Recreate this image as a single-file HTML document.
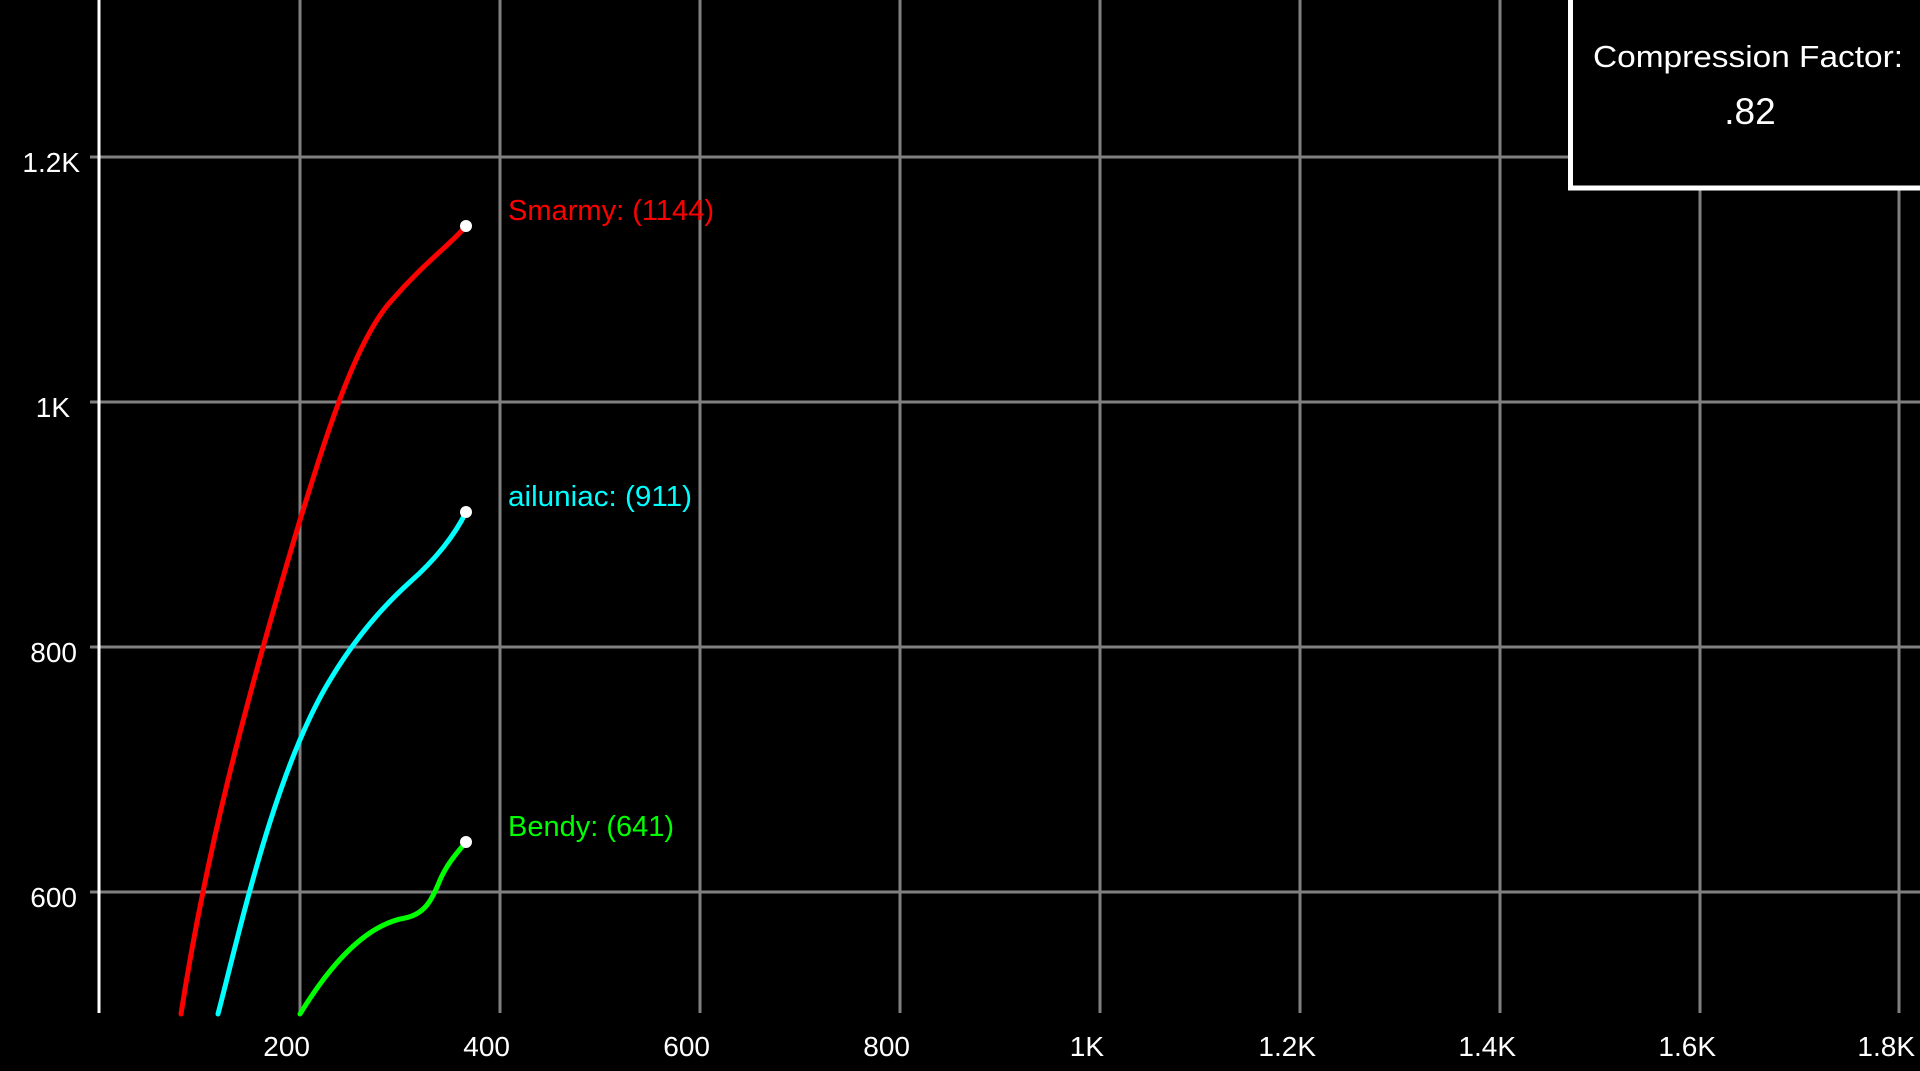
<!DOCTYPE html>
<html><head><meta charset="utf-8"><style>
html,body{margin:0;padding:0;background:#000;width:1920px;height:1071px;overflow:hidden}
svg{display:block}
text{font-family:"Liberation Sans",sans-serif}
</style></head><body>
<svg width="1920" height="1071" viewBox="0 0 1920 1071">
<rect width="1920" height="1071" fill="#000"/>
<g stroke="#808080" stroke-width="3">
<line x1="300" y1="0" x2="300" y2="1013"/>
<line x1="500" y1="0" x2="500" y2="1013"/>
<line x1="700" y1="0" x2="700" y2="1013"/>
<line x1="900" y1="0" x2="900" y2="1013"/>
<line x1="1100" y1="0" x2="1100" y2="1013"/>
<line x1="1300" y1="0" x2="1300" y2="1013"/>
<line x1="1500" y1="0" x2="1500" y2="1013"/>
<line x1="1700" y1="0" x2="1700" y2="1013"/>
<line x1="1899" y1="0" x2="1899" y2="1013"/>
<line x1="90" y1="157" x2="1920" y2="157"/>
<line x1="90" y1="402" x2="1920" y2="402"/>
<line x1="90" y1="647" x2="1920" y2="647"/>
<line x1="90" y1="892" x2="1920" y2="892"/>
</g>
<line x1="99" y1="0" x2="99" y2="1013" stroke="#fff" stroke-width="3"/>
<g fill="#fff" font-size="28" text-anchor="end">
<text x="80" y="172">1.2K</text>
<text x="70" y="417">1K</text>
<text x="77" y="662">800</text>
<text x="77" y="907">600</text>
<text x="310" y="1056">200</text>
<text x="510" y="1056">400</text>
<text x="710" y="1056">600</text>
<text x="910" y="1056">800</text>
<text x="1104" y="1056">1K</text>
<text x="1316" y="1056">1.2K</text>
<text x="1516" y="1056">1.4K</text>
<text x="1716" y="1056">1.6K</text>
<text x="1915" y="1056">1.8K</text>
</g>
<g fill="none" stroke-width="5" stroke-linecap="round" stroke-linejoin="round">
<path stroke="#ff0000" d="M181,1014 C205,860 240,720 300,520 C325,440 355,340 392,300 C425,262 450,245 466,226"/>
<path stroke="#00ffff" d="M218,1014 C240,930 275,770 330,680 C360,630 390,600 410,582 C435,560 455,535 466,512"/>
<path stroke="#00ff00" d="M300,1014 C330,965 365,925 405,918 C425,914 432,900 440,880 C448,862 458,852 466,842"/>
</g>
<g fill="#fff">
<circle cx="466" cy="226" r="6"/>
<circle cx="466" cy="512" r="6"/>
<circle cx="466" cy="842" r="6"/>
</g>
<g font-size="29">
<text x="508" y="220" fill="#ff0000" textLength="206" lengthAdjust="spacingAndGlyphs">Smarmy: (1144)</text>
<text x="508" y="506" fill="#00ffff" textLength="184" lengthAdjust="spacingAndGlyphs">ailuniac: (911)</text>
<text x="508" y="836" fill="#00ff00" textLength="166" lengthAdjust="spacingAndGlyphs">Bendy: (641)</text>
</g>
<rect x="1570.5" y="-10" width="360" height="198" fill="#000" stroke="#fff" stroke-width="5"/>
<text x="1748" y="67" fill="#fff" font-size="31" text-anchor="middle" textLength="310" lengthAdjust="spacingAndGlyphs">Compression Factor:</text>
<text x="1750" y="124" fill="#fff" font-size="37" text-anchor="middle">.82</text>
</svg>
</body></html>
